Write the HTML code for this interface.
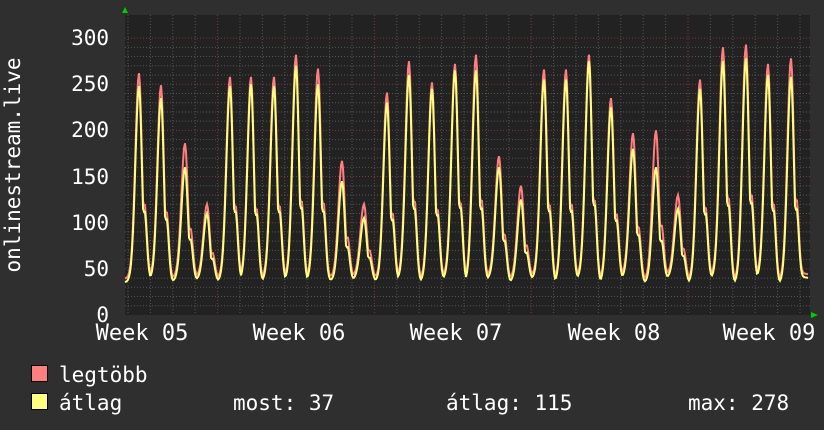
<!DOCTYPE html><html><head><meta charset="utf-8"><style>
body{margin:0;width:824px;height:430px;background:#2f2f2f;overflow:hidden;font-family:"DejaVu Sans Mono","Liberation Mono",monospace;color:#fff}
svg{position:absolute;left:0;top:0}
</style></head><body>
<svg id="s" width="824" height="430" xmlns="http://www.w3.org/2000/svg" font-family="DejaVu Sans Mono, Liberation Mono, monospace" fill="#fff">
<rect x="125" y="15" width="685" height="300" fill="#222"/>
<g id="grid"></g>
<path id="red" fill="none" stroke="#ff7f7f" stroke-width="2"/>
<path id="yel" fill="none" stroke="#ffff7f" stroke-width="2"/>
<polygon points="122,13 128,13 125,7" fill="#0c0"/>
<polygon points="811,312 811,318 818,315" fill="#0c0"/>
<g font-size="21" text-anchor="end">
<text x="109" y="322">0</text><text x="109" y="276">50</text><text x="109" y="230">100</text><text x="109" y="184">150</text><text x="109" y="137">200</text><text x="109" y="91">250</text><text x="109" y="45">300</text>
</g>
<text transform="translate(20,165) rotate(-90)" font-size="21" text-anchor="middle">onlinestream.live</text>
<g font-size="22" text-anchor="middle">
<text x="142" y="340">Week 05</text><text x="299" y="340">Week 06</text><text x="456" y="340">Week 07</text><text x="614" y="340">Week 08</text><text x="769" y="340">Week 09</text>
</g>
<rect x="31.5" y="365.5" width="16" height="16" fill="#ff7f7f" stroke="#000"/>
<rect x="31.5" y="393.5" width="16" height="16" fill="#ffff7f" stroke="#000"/>
<g font-size="21">
<text x="59" y="382">legtöbb</text><text x="59" y="410">átlag</text>
<text x="233" y="410">most: 37</text><text x="446" y="410">átlag: 115</text><text x="688" y="410">max: 278</text>
</g>
</svg>
<script>
var g=document.getElementById('grid'),h='';
function Y(v){return 315-v*0.923;}
for(var v=10;v<=300;v+=10){var y=Y(v);h+='<line x1="125" x2="810" y1="'+y+'" y2="'+y+'" stroke="'+(v%50?'#555':'#7a3a3a')+'" stroke-dasharray="1,2"/>';}
for(var x=128;x<810;x+=22.4){var r=((x-218)%156.8+156.8)%156.8;var maj=r<2||r>154.8;h+='<line y1="15" y2="315" x1="'+x+'" x2="'+x+'" stroke="'+(maj?'#7a3a3a':'#555')+'" stroke-dasharray="1,2"/>';}
g.innerHTML=h;
var P=[[139,262,248],[161,249,235],[185,186,160],[207,120,110],[230,258,248],[251,258,250],[274,258,248],[296,282,270],[318,267,250],[342,167,145],[364,120,105],[387,241,230],[409,275,260],[432,252,245],[455,272,265],[476,282,265],[499,172,160],[521,140,125],[544,266,255],[566,266,255],[589,282,275],[611,235,225],[633,197,180],[656,200,160],[678,130,115],[700,255,245],[723,290,275],[746,293,278],[768,272,260],[791,278,258]];
function val(x,k,base){var s=base;for(var i=0;i<P.length;i++){var d=x-P[i][0];var sg=d<0?3.6:2.8;var e=Math.exp(-d*d/(2*sg*sg));var sh=0.35*Math.exp(-(d-5.5)*(d-5.5)/10);var a=(P[i][k]-base)*Math.max(e,sh);if(a+base>s)s=a+base;}return s;}
function path(k,base){var d='';for(var x=125;x<=808;x+=1){d+=(x==125?'M':'L')+x+','+Y(val(x,k,base+3*Math.sin(x/7))).toFixed(1);}return d;}
document.getElementById('red').setAttribute('d',path(1,42));
document.getElementById('yel').setAttribute('d',path(2,38));
</script>
</body></html>
